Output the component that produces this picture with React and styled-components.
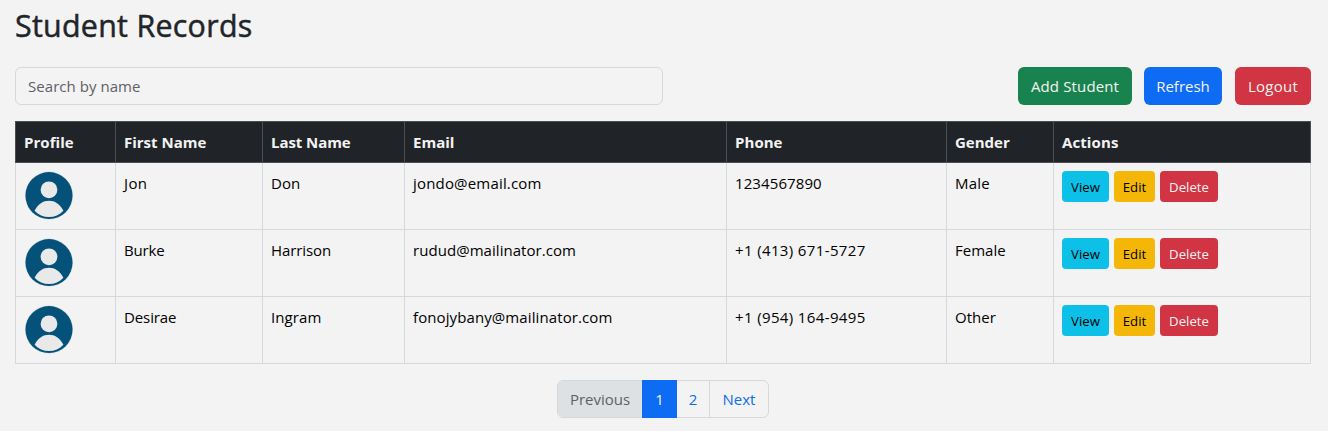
import React from "react";
import styled, { createGlobalStyle } from "styled-components";

const GlobalStyle = createGlobalStyle`
  *, *::before, *::after { box-sizing: border-box; }
  body {
    margin: 0;
    background: #f3f3f3;
    color: #212529;
    font-family: "Open Sans", "Noto Sans", sans-serif;
    font-size: 15px;
    line-height: 24px;
  }
`;

const Page = styled.main`
  width: 1328px;
  height: 431px;
  padding: 7px 17px 0 15px;
  overflow: hidden;
`;

const Title = styled.h2`
  margin: 0 0 22px;
  font-size: 30.4px;
  font-weight: 500;
  line-height: 38px;
  letter-spacing: ${(p) => p.$tracking}px;
  -webkit-text-stroke: 0.5px currentColor;
`;

const Toolbar = styled.div`
  display: flex;
  justify-content: space-between;
  margin-bottom: 16px;
`;

const SearchInput = styled.input`
  width: 648px;
  height: 38px;
  padding: 6px 12px;
  border: 1px solid #d5d8dc;
  border-radius: 6px;
  background: transparent;
  font: inherit;
  letter-spacing: 0.05px;
  &::placeholder { color: #5d6165; opacity: 1; }
`;

const ButtonGroup = styled.div`
  display: flex;
  gap: ${(p) => p.$gap}px;
`;

const tones = {
  success: ["#19834f", "#f3f3f3"],
  primary: ["#0d6bf4", "#f3f3f3"],
  danger: ["#d13442", "#f3f3f3"],
  info: ["#0dc0e8", "#000"],
  warning: ["#f4b708", "#000"],
};

const Button = styled.button`
  width: ${(p) => p.$width}px;
  height: 38px;
  padding: 0;
  border: 0;
  border-radius: 6px;
  background: ${(p) => tones[p.$tone][0]};
  color: ${(p) => tones[p.$tone][1]};
  font: inherit;
  white-space: nowrap;
`;

const LogoutButton = styled(Button)`
  margin-left: 1px;
`;

const SmallButton = styled(Button)`
  height: 31px;
  border-radius: 4px;
  font-size: 13.2px;
  line-height: 21px;
  padding-top: 2px;
`;

const Table = styled.table`
  width: 1295px;
  table-layout: fixed;
  border-collapse: collapse;
  margin-bottom: 16px;
`;

const Column = styled.col`
  width: ${(p) => p.$width}px;
`;

const HeaderCell = styled.th`
  height: 41px;
  padding: 8px;
  border: 1px solid #4b4f52;
  background: #202327;
  color: #f3f3f3;
  font-weight: 700;
  text-align: left;
  white-space: nowrap;
`;

const Cell = styled.td`
  height: 67px;
  padding: 8px;
  border: 1px solid #d5d8dc;
  color: #000;
  vertical-align: top;
  white-space: nowrap;
`;

const Text = styled.span`
  letter-spacing: ${(p) => p.$tracking || 0}px;
`;

const AvatarImage = styled.svg`
  display: block;
  width: 50px;
  height: 50px;
`;

const Pagination = styled.nav`
  display: flex;
  width: 212px;
  margin-left: 542px;
  border: 1px solid #d5d8dc;
  border-radius: 6px;
  height: 38px;
`;

const PageLink = styled.a`
  display: flex;
  align-items: center;
  justify-content: center;
  width: ${(p) => p.$width}px;
  color: #0d6bf4;
`;

const PreviousLink = styled(PageLink)`
  border-radius: 5px 0 0 5px;
  background: #dde1e3;
  color: #5d6165;
`;

const CurrentLink = styled(PageLink)`
  margin: -1px 0;
  background: #0d6bf4;
  color: #f3f3f3;
`;

const LastLink = styled(PageLink)`
  border-left: 1px solid #d5d8dc;
`;

function Avatar() {
  return (
    <AvatarImage viewBox="0 0 50 50" aria-label="Profile">
      <circle cx="25" cy="24.6" r="24" fill="#c9d3da" />
      <circle cx="25" cy="24.6" r="23.5" fill="#045179" />
      <circle cx="25" cy="18.8" r="8.4" fill="#e9e9e9" />
      <path d="M10.6 39.8C14.2 33 19.2 29.8 25 29.8s10.8 3.2 14.4 10c-3.8 4.2-8.8 6.3-14.4 6.3s-10.6-2.1-14.4-6.3Z" fill="#e9e9e9" />
    </AvatarImage>
  );
}

const columns = [
  ["Profile", 100, 0.05],
  ["First Name", 147, 0],
  ["Last Name", 142, -0.07],
  ["Email", 322, 0],
  ["Phone", 220, 0.05],
  ["Gender", 107, 0],
  ["Actions", 257, 0.1],
];

const students = [
  [["Jon", 0.4], ["Don", 0.1], ["jondo@email.com", 0.18], ["1234567890", 0.1], ["Male", 0.2]],
  [["Burke", -0.15], ["Harrison", -0.1], ["rudud@mailinator.com", 0.05], ["+1 (413) 671-5727", 0.37], ["Female", 0]],
  [["Desirae", -0.1], ["Ingram", 0.1], ["fonojybany@mailinator.com", 0.1], ["+1 (954) 164-9495", 0.37], ["Other", 0]],
];

export default function App() {
  return (
    <Page>
      <GlobalStyle />
      <Title $tracking={0.28}>Student Records</Title>
      <Toolbar>
        <SearchInput placeholder="Search by name" />
        <ButtonGroup $gap={12}>
          <Button $tone="success" $width={114}><Text $tracking={0.14}>Add Student</Text></Button>
          <Button $tone="primary" $width={78}><Text>Refresh</Text></Button>
          <LogoutButton $tone="danger" $width={76}><Text $tracking={0.25}>Logout</Text></LogoutButton>
        </ButtonGroup>
      </Toolbar>
      <Table>
        <colgroup>
          {columns.map(([name, width]) => <Column key={name} $width={width} />)}
        </colgroup>
        <thead>
          <tr>
            {columns.map(([name, , tracking]) => (
              <HeaderCell key={name}><Text $tracking={tracking}>{name}</Text></HeaderCell>
            ))}
          </tr>
        </thead>
        <tbody>
          {students.map((fields) => (
            <tr key={fields[2][0]}>
              <Cell><Avatar /></Cell>
              {fields.map(([value, tracking]) => (
                <Cell key={value}><Text $tracking={tracking}>{value}</Text></Cell>
              ))}
              <Cell>
                <ButtonGroup $gap={5}>
                  <SmallButton $tone="info" $width={47}>View</SmallButton>
                  <SmallButton $tone="warning" $width={41}>Edit</SmallButton>
                  <SmallButton $tone="danger" $width={58}>Delete</SmallButton>
                </ButtonGroup>
              </Cell>
            </tr>
          ))}
        </tbody>
      </Table>
      <Pagination>
        <PreviousLink $width={84}>Previous</PreviousLink>
        <CurrentLink $width={35}>1</CurrentLink>
        <PageLink $width={32}>2</PageLink>
        <LastLink $width={59}>Next</LastLink>
      </Pagination>
    </Page>
  );
}
